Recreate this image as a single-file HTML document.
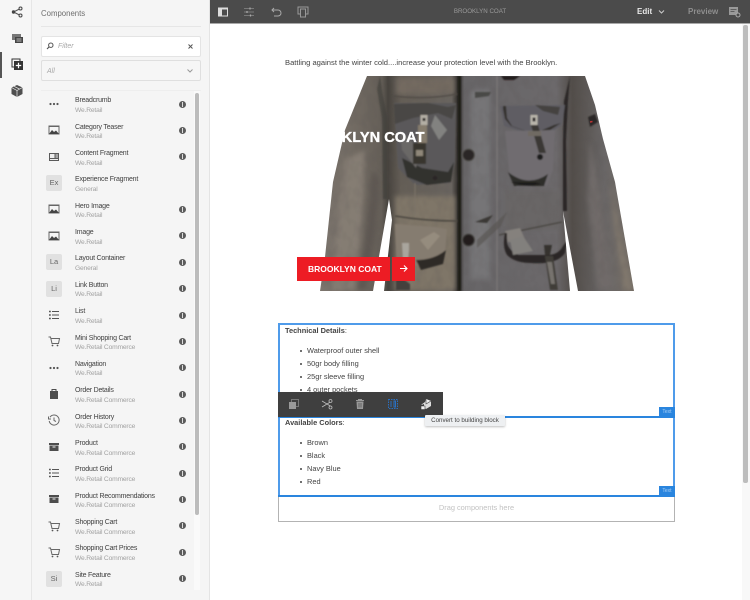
<!DOCTYPE html>
<html lang="en"><head><meta charset="utf-8"><title>Brooklyn Coat</title>
<style>
*{box-sizing:border-box}
html,body{margin:0;padding:0;width:750px;height:600px;overflow:hidden;background:#fff;font-family:"Liberation Sans",sans-serif}
#w{position:absolute;left:0;top:0;width:750px;height:600px;overflow:hidden;filter:blur(.35px)}
.a{position:absolute}
.t{position:absolute;white-space:nowrap;line-height:10px}
.n{left:75px;font-size:7px;color:#414141;letter-spacing:-.2px;margin-top:1px}
.s{left:75px;font-size:6.700px;color:#a2a2a2;letter-spacing:-.18px;margin-top:2px}
.ic{position:absolute;left:46px;width:16px;height:16px}
.i{position:absolute;left:179px;width:7px;height:7px;border-radius:50%;background:#5c5c5c}
.i:after{content:"";position:absolute;left:3px;top:1px;width:1px;height:5px;background:#ddd}
.b{position:absolute;left:46px;width:16px;height:16px;background:#e1e1e1;border-radius:2px;color:#666;font-size:7.500px;line-height:16px;text-align:center}
.p{position:absolute;white-space:nowrap;font-size:7.400px;line-height:10px;color:#444}
.li{left:307px}
.d{position:absolute;left:299.500px;width:2px;height:2px;border-radius:50%;background:#444}
.lb{position:absolute;left:659px;width:16px;height:10px;background:#2a85de;color:#a9d0f5;font-size:5px;line-height:10px;text-align:center}
</style></head><body><div id="w">
<svg width="0" height="0" style="position:absolute"><defs>
<symbol id="dots" viewBox="0 0 16 16"><circle cx="4.500" cy="8" r="1.100" fill="#555"/><circle cx="8" cy="8" r="1.100" fill="#555"/><circle cx="11.500" cy="8" r="1.100" fill="#555"/></symbol>
<symbol id="img" viewBox="0 0 16 16"><rect x="3" y="4" width="10" height="8" fill="none" stroke="#666" stroke-width="1"/><path d="M3 12l3-4 2 2 2-1.500 3 3.500z" fill="#444"/><rect x="3" y="4" width="10" height="1" fill="#666"/></symbol>
<symbol id="frag" viewBox="0 0 16 16"><rect x="3" y="4" width="10" height="8" fill="#5a5a5a"/><rect x="4" y="5" width="4.500" height="4" fill="#eee"/><rect x="9.500" y="5.500" width="2.500" height="1" fill="#eee"/><rect x="9.500" y="7.500" width="2.500" height="1" fill="#eee"/><rect x="4" y="10" width="8" height="1" fill="#eee"/></symbol>
<symbol id="list" viewBox="0 0 16 16"><path d="M6 4.500h7M6 8h7M6 11.500h7" stroke="#555" fill="none"/><path d="M3 4.500h1.800M3 8h1.800M3 11.500h1.800" stroke="#555" stroke-width="1.400" fill="none"/></symbol>
<symbol id="cart" viewBox="0 0 16 16"><path d="M2.500 4h2l1.500 6.500h6.500l1-5H5" fill="none" stroke="#666"/><circle cx="6.500" cy="12.500" r=".9" fill="#555"/><circle cx="11.500" cy="12.500" r=".9" fill="#555"/></symbol>
<symbol id="bag" viewBox="0 0 16 16"><path d="M4 5h8v8H4z" fill="#4d4d4d"/><path d="M6 5V3.500h4V5" fill="none" stroke="#4d4d4d"/></symbol>
<symbol id="hist" viewBox="0 0 16 16"><path d="M4 5.200A5 5 0 1 1 3.200 9" fill="none" stroke="#666"/><path d="M2.500 4.500v2.500h2.500" fill="none" stroke="#666"/><path d="M8 5.500V8.500l2 1" fill="none" stroke="#666"/></symbol>
<symbol id="box" viewBox="0 0 16 16"><rect x="3" y="4" width="10" height="2" fill="#4d4d4d"/><path d="M3.500 6.500h9V12h-9z" fill="#4d4d4d"/><rect x="6.500" y="7.500" width="3" height="1" fill="#eee"/></symbol>
<symbol id="cube" viewBox="0 0 16 16"><path d="M8 2l5.500 2.500v6.500L8 14l-5.500-3V4.500z" fill="#4f4f4f"/><path d="M2.500 4.500L8 7.500l5.500-3M8 7.500V14M5 3.300l5.500 2.800" stroke="#eee" stroke-width=".7" fill="none"/></symbol>
<linearGradient id="cg" gradientUnits="userSpaceOnUse" x1="318" x2="636" y1="0" y2="0"><stop offset="0" stop-color="#7d766f"/><stop offset=".12" stop-color="#716a62"/><stop offset=".2" stop-color="#655f58"/><stop offset=".22" stop-color="#47433e"/><stop offset=".26" stop-color="#645e56"/><stop offset=".42" stop-color="#6a6560"/><stop offset=".44" stop-color="#2f2c29"/><stop offset=".46" stop-color="#676567"/><stop offset=".75" stop-color="#6c696b"/><stop offset=".8" stop-color="#524d49"/><stop offset=".9" stop-color="#696666"/><stop offset="1" stop-color="#787067"/></linearGradient>
<filter id="bl" x="-20%" y="-20%" width="140%" height="140%"><feGaussianBlur stdDeviation="2.500"/></filter>
<filter id="bs" x="-10%" y="-10%" width="120%" height="120%"><feGaussianBlur stdDeviation=".7"/></filter>
<filter id="tx" x="0" y="0" width="100%" height="100%"><feTurbulence type="fractalNoise" baseFrequency=".12 .08" numOctaves="2" seed="7"/><feColorMatrix values="0 0 0 0 .1  0 0 0 0 .09  0 0 0 0 .09  1 0 0 0 -.42"/></filter>
<clipPath id="cc"><path d="M367 76H585L595 105L603 139L615 182L634 291H578L563 211L570 291H384L392 220L389 199L373 291H320L325 257L333 182L345 130z"/></clipPath>
</defs></svg>

<!-- rail -->
<div class="a" style="left:0;top:0;width:32px;height:600px;background:#f6f6f6;border-right:1px solid #e6e6e6"></div>
<div class="a" style="left:0;top:52px;width:2px;height:26px;background:#555"></div>
<svg class="a" style="left:10px;top:5px" width="14" height="14" viewBox="0 0 14 14"><path d="M3.500 7L10.500 3.500M3.500 7l7 3.500" stroke="#555" fill="none"/><circle cx="3.500" cy="7" r="1.700" fill="#444"/><circle cx="10.500" cy="3.500" r="1.500" fill="#f6f6f6" stroke="#444"/><circle cx="10.500" cy="10.500" r="1.500" fill="#f6f6f6" stroke="#444"/></svg>
<svg class="a" style="left:10px;top:31px" width="14" height="14" viewBox="0 0 14 14"><rect x="2" y="3" width="9" height="6" fill="#777"/><rect x="5" y="6" width="8" height="6" fill="#444"/><path d="M6.500 8h5M6.500 10h5" stroke="#ddd" stroke-width=".7"/></svg>
<svg class="a" style="left:10px;top:57px" width="14" height="14" viewBox="0 0 14 14"><rect x="2" y="2" width="8" height="8" fill="none" stroke="#333"/><rect x="4" y="4" width="9" height="9" fill="#333"/><path d="M8.500 5.800v5.400M5.800 8.500h5.400" stroke="#fff" stroke-width="1.200"/></svg>
<svg class="a" style="left:9px;top:83px" width="16" height="16"><use href="#cube"/></svg>

<!-- sidebar -->
<div class="a" style="left:32px;top:0;width:178px;height:600px;background:#f5f5f5;border-right:1px solid #e4e4e4"></div>
<div class="t" style="left:41px;top:8.500px;font-size:7.800px;color:#6e6e6e">Components</div>
<div class="a" style="left:41px;top:26px;width:160px;height:1px;background:#e6e6e6"></div>
<div class="a" style="left:41px;top:36px;width:160px;height:21px;background:#fff;border:1px solid #e4e4e4;border-radius:2px"></div>
<svg class="a" style="left:46px;top:42px" width="8" height="8" viewBox="0 0 8 8"><circle cx="4.800" cy="3.200" r="2.200" fill="none" stroke="#555"/><path d="M3.200 4.800L1 7" stroke="#555" stroke-width="1.100"/></svg>
<div class="t" style="left:58px;top:41.500px;font-size:7px;font-style:italic;color:#a8a8a8">Filter</div>
<svg class="a" style="left:187px;top:43px" width="7" height="7" viewBox="0 0 7 7"><path d="M1.500 1.500l4 4M5.500 1.500l-4 4" stroke="#555" stroke-width="1"/></svg>
<div class="a" style="left:41px;top:60px;width:160px;height:21px;background:#f6f6f6;border:1px solid #dfdfdf;border-radius:2px"></div>
<div class="t" style="left:47px;top:66.500px;font-size:7px;font-style:italic;color:#a8a8a8">All</div>
<svg class="a" style="left:186px;top:68px" width="8" height="6" viewBox="0 0 8 6"><path d="M1.500 1.500L4 4l2.500-2.500" stroke="#999" fill="none"/></svg>
<div class="a" style="left:41px;top:90px;width:160px;height:1px;background:#eee"></div>
<div class="a" style="left:194px;top:91px;width:6px;height:499px;background:#fafafa"></div>
<div class="a" style="left:195px;top:93px;width:4px;height:422px;background:#bcbcbc;border-radius:2px"></div>

<svg class="ic" style="top:96px"><use href="#dots"/></svg><div class="t n" style="top:95px">Breadcrumb</div><div class="t s" style="top:104px">We.Retail</div><div class="i" style="top:101px"></div>
<svg class="ic" style="top:122px"><use href="#img"/></svg><div class="t n" style="top:122px">Category Teaser</div><div class="t s" style="top:130px">We.Retail</div><div class="i" style="top:127px"></div>
<svg class="ic" style="top:149px"><use href="#frag"/></svg><div class="t n" style="top:148px">Content Fragment</div><div class="t s" style="top:157px">We.Retail</div><div class="i" style="top:153px"></div>
<div class="b" style="top:175px">Ex</div><div class="t n" style="top:174px">Experience Fragment</div><div class="t s" style="top:183px">General</div>
<svg class="ic" style="top:201px"><use href="#img"/></svg><div class="t n" style="top:201px">Hero Image</div><div class="t s" style="top:209px">We.Retail</div><div class="i" style="top:206px"></div>
<svg class="ic" style="top:228px"><use href="#img"/></svg><div class="t n" style="top:227px">Image</div><div class="t s" style="top:236px">We.Retail</div><div class="i" style="top:232px"></div>
<div class="b" style="top:254px">La</div><div class="t n" style="top:253px">Layout Container</div><div class="t s" style="top:262px">General</div><div class="i" style="top:259px"></div>
<div class="b" style="top:281px">Li</div><div class="t n" style="top:280px">Link Button</div><div class="t s" style="top:288px">We.Retail</div><div class="i" style="top:285px"></div>
<svg class="ic" style="top:307px"><use href="#list"/></svg><div class="t n" style="top:306px">List</div><div class="t s" style="top:315px">We.Retail</div><div class="i" style="top:312px"></div>
<svg class="ic" style="top:333px"><use href="#cart"/></svg><div class="t n" style="top:333px">Mini Shopping Cart</div><div class="t s" style="top:341px">We.Retail Commerce</div><div class="i" style="top:338px"></div>
<svg class="ic" style="top:360px"><use href="#dots"/></svg><div class="t n" style="top:359px">Navigation</div><div class="t s" style="top:367px">We.Retail</div><div class="i" style="top:364px"></div>
<svg class="ic" style="top:386px"><use href="#bag"/></svg><div class="t n" style="top:385px">Order Details</div><div class="t s" style="top:394px">We.Retail Commerce</div><div class="i" style="top:391px"></div>
<svg class="ic" style="top:412px"><use href="#hist"/></svg><div class="t n" style="top:412px">Order History</div><div class="t s" style="top:420px">We.Retail Commerce</div><div class="i" style="top:417px"></div>
<svg class="ic" style="top:439px"><use href="#box"/></svg><div class="t n" style="top:438px">Product</div><div class="t s" style="top:447px">We.Retail Commerce</div><div class="i" style="top:443px"></div>
<svg class="ic" style="top:465px"><use href="#list"/></svg><div class="t n" style="top:464px">Product Grid</div><div class="t s" style="top:473px">We.Retail Commerce</div><div class="i" style="top:470px"></div>
<svg class="ic" style="top:491px"><use href="#box"/></svg><div class="t n" style="top:491px">Product Recommendations</div><div class="t s" style="top:499px">We.Retail Commerce</div><div class="i" style="top:496px"></div>
<svg class="ic" style="top:518px"><use href="#cart"/></svg><div class="t n" style="top:517px">Shopping Cart</div><div class="t s" style="top:526px">We.Retail Commerce</div><div class="i" style="top:522px"></div>
<svg class="ic" style="top:544px"><use href="#cart"/></svg><div class="t n" style="top:543px">Shopping Cart Prices</div><div class="t s" style="top:552px">We.Retail Commerce</div><div class="i" style="top:549px"></div>
<div class="b" style="top:571px">Si</div><div class="t n" style="top:570px">Site Feature</div><div class="t s" style="top:578px">We.Retail</div><div class="i" style="top:575px"></div>

<!-- top bar -->
<div class="a" style="left:210px;top:0;width:540px;height:24px;background:#4b4b4b;border-bottom:1px solid #a8a8a8"></div>
<svg class="a" style="left:216px;top:5px" width="14" height="14" viewBox="0 0 14 14"><rect x="2.500" y="3" width="9" height="8" fill="#4b4b4b" stroke="#ddd"/><rect x="3" y="3.500" width="3" height="7" fill="#ddd"/><rect x="3" y="3" width="8.500" height="1.500" fill="#ddd"/></svg>
<svg class="a" style="left:242px;top:5px" width="14" height="14" viewBox="0 0 14 14"><path d="M2 3.500h10M2 7h10M2 10.500h10" stroke="#888" stroke-width=".8"/><path d="M8 2.500v2M5 6v2M8.500 9.500v2" stroke="#aaa" stroke-width="1.200"/></svg>
<svg class="a" style="left:269px;top:5px" width="14" height="14" viewBox="0 0 14 14"><path d="M3 5h6a3 3 0 0 1 0 6H5" fill="none" stroke="#aaa"/><path d="M5 3L3 5l2 2" fill="none" stroke="#aaa"/></svg>
<svg class="a" style="left:296px;top:5px" width="14" height="14" viewBox="0 0 14 14"><rect x="2" y="2" width="10" height="7" fill="none" stroke="#999"/><rect x="4.500" y="4" width="5" height="8" fill="#4b4b4b" stroke="#999"/></svg>
<div class="t" style="left:0;width:960px;top:7px;text-align:center;font-size:6.200px;color:#9a9a9a">BROOKLYN COAT</div>
<div class="t" style="left:637px;top:7px;font-size:8px;font-weight:bold;color:#e8e8e8">Edit</div>
<svg class="a" style="left:658px;top:9px" width="7" height="6" viewBox="0 0 7 6"><path d="M1 1.500L3.500 4 6 1.500" stroke="#ccc" fill="none"/></svg>
<div class="t" style="left:688px;top:7px;font-size:8px;font-weight:bold;color:#8e8e8e">Preview</div>
<svg class="a" style="left:727px;top:4px" width="15" height="15" viewBox="0 0 15 15"><rect x="2" y="3" width="9" height="8" fill="#999"/><path d="M3.500 5.500h6M3.500 7.500h4" stroke="#4b4b4b" stroke-width=".7"/><circle cx="11" cy="11" r="2" fill="#4b4b4b" stroke="#aaa"/></svg>

<!-- page scrollbar -->
<div class="a" style="left:742px;top:24px;width:8px;height:576px;background:#f8f8f8"></div>
<div class="a" style="left:743px;top:25px;width:5px;height:458px;background:#bdbdbd;border-radius:2px"></div>

<!-- page -->
<div class="p" style="left:285px;top:58px;font-size:7.600px">Battling against the winter cold....increase your protection level with the Brooklyn.</div>

<svg class="a" style="left:0;top:0" width="750" height="300" viewBox="0 0 750 300">
<g clip-path="url(#cc)">
<rect x="310" y="70" width="335" height="225" fill="url(#cg)"/>
<g filter="url(#bl)">
<path d="M345 160l-8 60-5 70 22 0 8-70 3-70z" fill="#857d73"/>
<path d="M372 170l-6 60-8 60 8 0 10-60 4-50z" fill="#5e5952"/>
<path d="M395 196h60v94h-60z" fill="#7f7667"/>
<path d="M396 78h58v16h-58z" fill="#736a61"/>
<path d="M590 140l12 60 12 90h-16l-10-90z" fill="#6f6b69"/>
<path d="M470 90h20v190h-20z" fill="#767477"/>
<path d="M505 190h55v40h-55z" fill="#696666"/>
<path d="M610 180l10 50 12 60h-8l-10-70z" fill="#81786d"/>
</g>
<rect x="310" y="70" width="335" height="225" filter="url(#tx)" opacity=".4"/>
<g filter="url(#bs)">
<path d="M501 76h19l-6 4h-10z" fill="#211f1d"/>
<path d="M380 76l3 20 4 20v83h-4l-1-80-5-30z" fill="#3d3a36" opacity=".6"/>
<path d="M570 76l-6 25-1 40 0 70 4 0-1-70 2-40z" fill="#2a2826"/>
<path d="M458 76h3v215h-3z" fill="#1d1b19"/>
<path d="M393 96q35 4 64-2" stroke="#4f4a44" stroke-width="1.200" fill="none"/>
<path d="M497 76v215" stroke="#858180" stroke-width="1.200" opacity=".7"/>
<path d="M394 103h62l-1 60-5 20-35 2-17-17z" fill="#5a595a"/>
<path d="M394 104l34-1 20 4 8-2-4 14-14-6-25 5-18 6z" fill="#484644"/>
<path d="M435 115l12 15-8 10-8-14z" fill="#828280"/>
<path d="M402 158l20 10 26 4 6-10-3 20-24 3-20-8z" fill="#33302d"/>
<path d="M400 130l20 20-4 18-14-18z" fill="#6a6866"/>
<rect x="420.500" y="115" width="7" height="10" fill="#b3aea4"/><rect x="422.500" y="118" width="3" height="3" fill="#2a2826"/>
<path d="M418 125h9v18h-9z" fill="#857c6d"/>
<path d="M413 143h13v21h-13z" fill="#37342f"/><rect x="416" y="150" width="7" height="6" fill="#8f8779"/>
<circle cx="435" cy="178" r="2.200" fill="#2a2725"/>
<path d="M500 106l65-1-3 20-12 8-20 2-26-9z" fill="#5f5d63"/>
<path d="M503 106l-0 3 2 10 6 7 17 6 22-2 11-7-7 2-14 6-14 0-14-5-5-8-1-12z" fill="#34312d"/>
<path d="M535 105l25 2-2 8-15-4z" fill="#44423f"/>
<path d="M505 131l50-1-2 40-6 15-30 2-8-16z" fill="#6f6c70"/>
<path d="M508 172q20 16 40 2l-4 12h-30z" fill="#2f2d2a"/>
<path d="M475 92l16 0-2 4-14 2z" fill="#4a4847"/>
<rect x="530.500" y="115" width="7" height="10" fill="#bab6ac"/><rect x="532.500" y="117.500" width="3" height="4" fill="#2a2826"/>
<path d="M531 125h7l8 28h-7z" fill="#3a3835"/><path d="M528 131h13v5h-13z" fill="#6f6b64"/>
<circle cx="540" cy="157" r="3" fill="#1f1d1b"/>
<circle cx="468.500" cy="155" r="6" fill="#2a2826" stroke="#55524f"/>
<circle cx="468.500" cy="240" r="6" fill="#211f1e" stroke="#4c4a47"/>
<path d="M395 216q30 5 62 5" stroke="#4c4741" stroke-width="1.500" fill="none"/>
<path d="M415 183v32" stroke="#7b7369" stroke-width="1"/>
<path d="M395 224l40 3 12 2-2 24-20 12-28 2z" fill="#857c6f"/>
<path d="M416 260q18 0 30-10l-3 14-22 6z" fill="#2e2b28"/>
<path d="M420 240l14-8 6 4-12 14z" fill="#958c7e"/>
<path d="M402 243h7v7l-1 10h-5z" fill="#a9a59d"/>
<path d="M396 274l14 10v6h-14z" fill="#44413d"/>
<path d="M499 235l63-13" stroke="#47443f" stroke-width="1.200"/>
<path d="M505 231l15-3 6 14-18 0z" fill="#85817d"/>
<path d="M505 233q-3 14 2 22q8 8 24 8q26 2 34-10l2-12-4 5q-4 8-14 9h-30q-10-4-12-12l0-10z" fill="#2b2825"/>
<path d="M510 240l13-4 10 15-20 4z" fill="#82807d"/>
<path d="M545 256h8l5 34h-8z" fill="#3f3c39"/><path d="M547 262h5l3 22h-4z" fill="#77736e"/>
<path d="M544 245l8 0-2 10h-5z" fill="#35322f"/>
<path d="M477 240l30-28-6 14-24 22z" fill="#55524f" opacity=".6"/>
<path d="M475 222l18-7-6 8z" fill="#3a3835"/>
<path d="M511 182q15 6 30 2l-6 -2z" fill="#1f1d1b"/>
<path d="M588 117l7-3 3 8-8 5z" fill="#2b2826"/>
</g>
<path d="M590 122l2.500-.5" stroke="#b33" stroke-width="1.500"/>
</g>
<text x="424.500" y="142" text-anchor="end" font-family="Liberation Sans" font-weight="bold" font-size="14.600" fill="#fff" stroke="#fff" stroke-width=".35">BROOKLYN COAT</text>
</svg>

<div class="a" style="left:296.500px;top:257px;width:93.500px;height:23.500px;background:#ed1c24"></div>
<div class="a" style="left:391.500px;top:257px;width:23px;height:23.500px;background:#ed1c24"></div>
<div class="t" style="left:308px;top:263.500px;font-size:8.500px;font-weight:bold;color:#fff">BROOKLYN COAT</div>
<svg class="a" style="left:398px;top:263px" width="11" height="11" viewBox="0 0 11 11"><path d="M2 5.500h7M6 2.500l3 3-3 3" stroke="#fff" stroke-width="1.100" fill="none"/></svg>

<!-- text boxes -->
<div class="a" style="left:278px;top:496px;width:397px;height:26px;border:1px solid #b3b3b3;border-top:0;border-right-width:1.500px;border-bottom-width:1.500px"></div>
<div class="a" style="left:278px;top:323px;width:397px;height:95px;border:2px solid #4f9bea"></div>
<div class="a" style="left:278px;top:416px;width:397px;height:81px;border:2px solid #4f9bea"></div>
<div class="a" style="left:278px;top:416px;width:397px;height:2px;background:#2a85de"></div>
<div class="a" style="left:278px;top:495px;width:397px;height:2px;background:#2a85de"></div>
<div class="p" style="left:285px;top:326px"><b>Technical Details</b>:</div>
<div class="d" style="top:350px"></div><div class="p li" style="top:346px">Waterproof outer shell</div>
<div class="d" style="top:363px"></div><div class="p li" style="top:359px">50gr body filling</div>
<div class="d" style="top:376px"></div><div class="p li" style="top:372px">25gr sleeve filling</div>
<div class="d" style="top:389px"></div><div class="p li" style="top:385px">4 outer pockets</div>
<div class="p" style="left:285px;top:418px"><b>Available Colors</b>:</div>
<div class="d" style="top:442px"></div><div class="p li" style="top:438px">Brown</div>
<div class="d" style="top:455px"></div><div class="p li" style="top:451px">Black</div>
<div class="d" style="top:468px"></div><div class="p li" style="top:464px">Navy Blue</div>
<div class="d" style="top:481px"></div><div class="p li" style="top:477px">Red</div>
<div class="lb" style="top:407px">Text</div>
<div class="lb" style="top:486px">Text</div>
<div class="p" style="left:278px;width:397px;text-align:center;top:503px;color:#c2c2c2">Drag components here</div>

<!-- toolbar -->
<div class="a" style="left:278px;top:392px;width:165px;height:25px;background:#3f3f3f"></div>
<svg class="a" style="left:288px;top:398px" width="12" height="12" viewBox="0 0 12 12"><rect x="3.500" y="1.500" width="7" height="7" fill="none" stroke="#777"/><rect x="1" y="4" width="7" height="7" fill="#999"/></svg>
<svg class="a" style="left:321px;top:398px" width="12" height="12" viewBox="0 0 12 12"><path d="M1 3l10 6M1 9l10-6" stroke="#bbb" stroke-width=".8"/><circle cx="9.500" cy="3" r="1.500" fill="#3f3f3f" stroke="#bbb" stroke-width=".8"/><circle cx="9.500" cy="9.500" r="1.500" fill="#3f3f3f" stroke="#bbb" stroke-width=".8"/></svg>
<svg class="a" style="left:354px;top:398px" width="12" height="12" viewBox="0 0 12 12"><path d="M2 2.500h8M4.500 2.500V1.500h3v1" stroke="#999" fill="none"/><path d="M2.500 3.500h7l-.5 7.500h-6z" fill="#999"/><path d="M5 5v4.500M7 5v4.500" stroke="#3f3f3f" stroke-width=".6"/></svg>
<svg class="a" style="left:387px;top:398px" width="12" height="12" viewBox="0 0 12 12"><rect x="1.500" y="1.500" width="9" height="9" fill="none" stroke="#2a6fc0" stroke-dasharray="1.500 1"/><path d="M4 3v6M7 3h1.500v6H7z" stroke="#2a6fc0" fill="none"/></svg>
<svg class="a" style="left:419px;top:397px" width="14" height="14" viewBox="0 0 14 14"><path d="M7 2l5 2v5l-5 3-2-1V7L2.500 8V7.500L6 5z" fill="#ddd"/><path d="M7 2v5l5-3M2 9h4v3.500H2z" stroke="#3f3f3f" stroke-width=".6" fill="#eee"/></svg>

<!-- tooltip -->
<div class="t" style="left:425px;top:415px;width:80px;height:11px;line-height:11px;background:#eef0f2;color:#444;font-size:6.200px;text-align:center;border-radius:1px;box-shadow:0 1px 2px rgba(0,0,0,.25)">Convert to building block</div>
</div></body></html>
